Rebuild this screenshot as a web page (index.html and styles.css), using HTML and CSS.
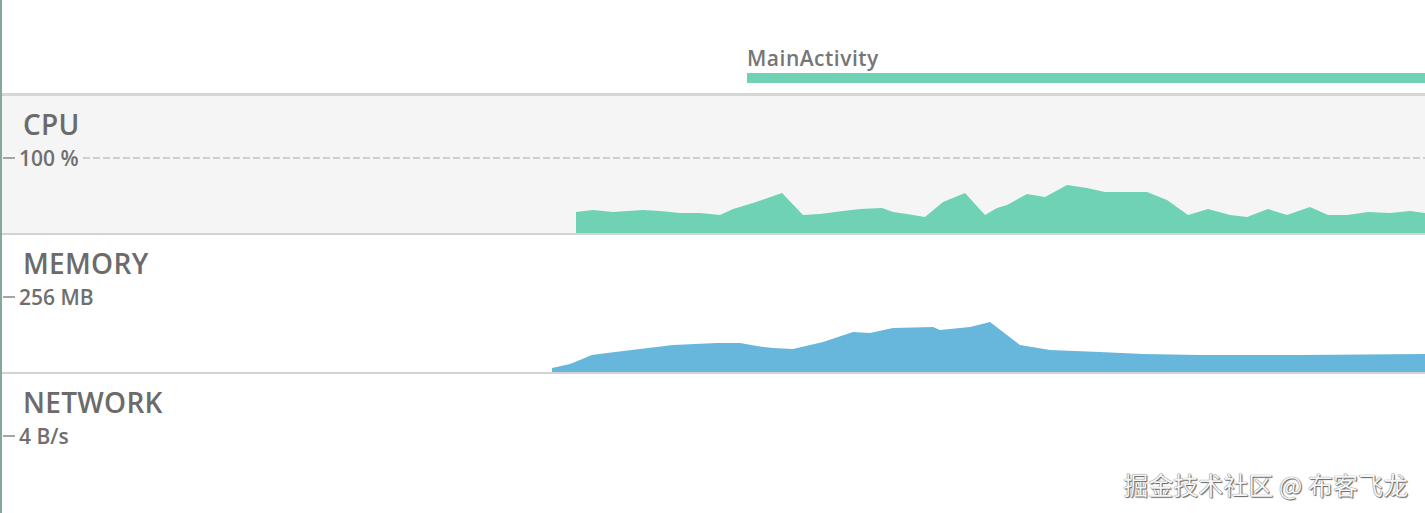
FILE: index.html
```html
<!DOCTYPE html>
<html lang="en">
<head>
<meta charset="utf-8">
<title>Profiler</title>
<link rel="stylesheet" href="styles.css">
</head>
<body>
<div class="profiler">
  <div class="timeline">
    <div class="activity-name">MainActivity</div>
    <div class="activity-bar"></div>
  </div>

  <section class="track track-cpu">
    <svg class="chart" viewBox="2 0 1423 137" preserveAspectRatio="none">
      <polygon class="area-cpu" points="576,137 576,116 593,114 613,116 643,114 660,115 680,117 700,117 720,119 733,113 753,107 782,97 803,119 820,118 843,115 860,113 882,112 893,116 907,118 925,121 943,106 965,97 985,119 997,112 1007,109 1027,98 1045,101 1067,89 1087,92 1105,96 1147,96 1167,104 1188,119 1208,113 1230,119 1247,121 1268,113 1287,119 1310,111 1328,119 1347,119 1368,116 1390,117 1410,115 1425,117 1425,137"/>
    </svg>
    <div class="track-info">
      <div class="track-title">CPU</div>
      <div class="track-scale">
        <span class="tick"></span><span class="scale-value">100 %</span><span class="guide"></span>
      </div>
    </div>
  </section>

  <section class="track track-memory">
    <svg class="chart" viewBox="2 0 1423 137" preserveAspectRatio="none">
      <polygon class="area-memory" points="552,137 552,133 570,129 592,120 607,118 640,114 673,110 717,108 740,108 757,111 773,113 793,114 823,107 853,97 870,98 893,93 933,92 940,95 970,92 990,87 1020,110 1050,115 1100,117 1143,119 1200,120 1300,120 1425,119 1425,137"/>
    </svg>
    <div class="track-info">
      <div class="track-title">MEMORY</div>
      <div class="track-scale">
        <span class="tick"></span><span class="scale-value">256 MB</span>
      </div>
    </div>
  </section>

  <section class="track track-network">
    <div class="track-info">
      <div class="track-title">NETWORK</div>
      <div class="track-scale">
        <span class="tick"></span><span class="scale-value">4 B/s</span>
      </div>
    </div>
  </section>

  <div class="watermark">掘金技术社区 @ 布客飞龙</div>
</div>
</body>
</html>
```

FILE: styles.css
```css
* { box-sizing: border-box; }

html, body {
  margin: 0;
  padding: 0;
  background: #ffffff;
}

body {
  font-family: "Open Sans", "Noto Sans", sans-serif;
  color: #6d6d6d;
  width: 1425px;
  height: 513px;
  overflow: hidden;
}

.profiler {
  position: relative;
  height: 513px;
  border-left: 2px solid #86a89c;
  display: flex;
  flex-direction: column;
}

.timeline {
  height: 96px;
  flex: none;
  border-bottom: 3px solid #d6d6d6;
  display: flex;
  flex-direction: column;
  justify-content: flex-end;
  padding-left: 745px;
  padding-bottom: 10px;
}

.activity-name {
  font-size: 21px;
  font-weight: 600;
  line-height: 24px;
  color: #767676;
  margin-bottom: 3px;
  letter-spacing: 0.5px;
}

.activity-bar {
  height: 10px;
  background: #6fd2b5;
}

.track {
  display: grid;
  grid-template-areas: "stack";
  flex: none;
  height: 139px;
  border-bottom: 2px solid #d3d3d3;
}

.track-cpu { background: #f5f5f5; }
.track-network { border-bottom: none; flex: 1; }

.chart {
  grid-area: stack;
  width: 100%;
  height: 137px;
  display: block;
}

.area-cpu { fill: #6fd2b5; }
.area-memory { fill: #67b7dc; }

.track-info {
  grid-area: stack;
  padding-top: 12px;
  position: relative;
}

.track-title {
  font-size: 28px;
  line-height: 32px;
  font-weight: 600;
  padding-left: 21px;
  color: #6b6b6b;
  letter-spacing: 0.3px;
}

.track-scale {
  display: flex;
  align-items: center;
  height: 24px;
  margin-top: 6px;
}

.tick {
  width: 12px;
  height: 2px;
  margin-left: 1px;
  margin-right: 4px;
  background: #a5a5a5;
  flex: none;
}

.scale-value {
  font-size: 21px;
  line-height: 24px;
  font-weight: 600;
  color: #6f6f6f;
  white-space: nowrap;
}

.guide {
  flex: 1;
  height: 2px;
  margin-left: 4px;
  background: repeating-linear-gradient(to right, #cfcfcf 0 7px, transparent 7px 10px);
}

.watermark {
  position: absolute;
  right: 17px;
  top: 468px;
  font-family: "Noto Sans CJK SC", "Noto Sans", sans-serif;
  font-size: 25px;
  line-height: 32px;
  color: #f6f6f6;
  text-shadow: 0 0 1px #3a3a3a, 1px 1px 1px #6a6a6a;
  white-space: nowrap;
}
```
